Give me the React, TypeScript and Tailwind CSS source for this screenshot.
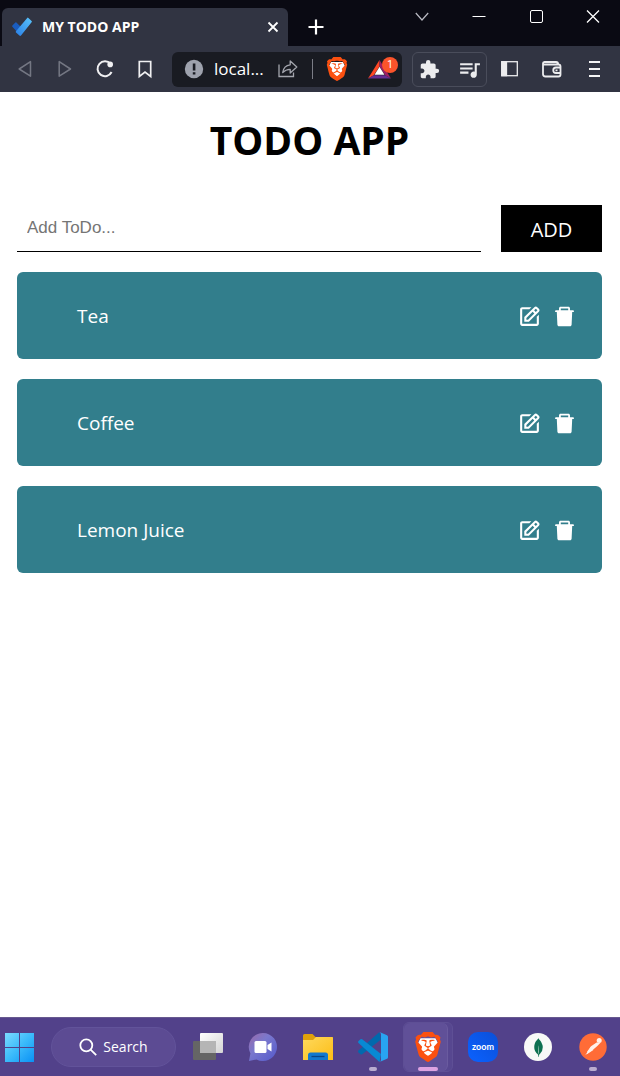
import { useState } from "react";
import type { ReactNode } from "react";
import { AiFillDelete } from "react-icons/ai";
import { BiEdit } from "react-icons/bi";
import { MdExtension, MdQueueMusic } from "react-icons/md";
import { SiBrave, SiMongodb } from "react-icons/si";

const initialTodos = ["Tea", "Coffee", "Lemon Juice"];

function BraveLion({ className }: { className: string }) {
  return (
    <span className={`relative block ${className}`}>
      <svg viewBox="0 0 24 24" className="absolute inset-0 size-full" aria-hidden="true">
        <path d="M6 5h12l2 4-3 9-5 4-5-4-3-9z" fill="#fff" />
      </svg>
      <SiBrave className="absolute inset-0 size-full text-[#fb5010]" />
    </span>
  );
}

function ToolButton({ label, children }: { label: string; children: ReactNode }) {
  return (
    <button type="button" aria-label={label} className="flex size-6 shrink-0 items-center justify-center">
      {children}
    </button>
  );
}

function TabStrip() {
  return (
    <div className="flex h-[46px] items-end bg-[#0a0a13]">
      <div className="ml-0.5 flex h-[38px] w-[286px] shrink-0 items-center rounded-t-md bg-[#313442] pr-[7px] pl-2.5">
        <svg viewBox="0 0 20 20" className="size-5 shrink-0" aria-hidden="true">
          <defs>
            <linearGradient id="tick" x1="0" y1="1" x2="1" y2="0">
              <stop offset="0" stopColor="#2a7fe6" />
              <stop offset="1" stopColor="#5ac4fb" />
            </linearGradient>
          </defs>
          <path d="M.4 8.6 3.4 5.500q.5-.5 1 0L11 12 7.400 17.400.4 9.700q-.5-.6 0-1.100Z" fill="#1a5cbe" />
          <path d="M4 14.300 15.200.9q.6-.7 1.200 0l3.200 3.100q.6.6 0 1.200L9 18.600q-.8.9-1.600 0L4 15.400q-.5-.5 0-1.100Z" fill="url(#tick)" />
        </svg>
        <span className="ml-2.5 flex-1 font-['Open_Sans','Noto_Sans',sans-serif] text-sm font-bold text-white">
          MY TODO APP
        </span>
        <button type="button" aria-label="Close tab" className="flex size-4 items-center justify-center">
          <svg viewBox="0 0 12 12" className="size-3" fill="none" stroke="#fff" strokeWidth="1.8" aria-hidden="true">
            <path d="m1.5 1.5 9 9M10.5 1.5l-9 9" />
          </svg>
        </button>
      </div>
      <button type="button" aria-label="New tab" className="ml-4 flex h-[38px] w-6 items-center justify-center">
        <svg viewBox="0 0 16 16" className="size-4" stroke="#fff" strokeWidth="2.2" aria-hidden="true">
          <path d="M8 .5v15M.5 8h15" />
        </svg>
      </button>
      <div className="ml-auto flex h-[46px] items-start gap-[41px] pt-2 pr-[19px] text-white">
        <button type="button" aria-label="Search tabs" className="flex size-4 items-center justify-center">
          <svg viewBox="0 0 16 16" className="size-4" fill="none" stroke="#b9bac2" strokeWidth="1.2" aria-hidden="true">
            <path d="m1.8 5 6.2 7 6.2-7" />
          </svg>
        </button>
        <button type="button" aria-label="Minimize" className="flex size-4 items-center justify-center">
          <svg viewBox="0 0 16 16" className="size-4" stroke="currentColor" aria-hidden="true">
            <path d="M1.5 8.5h13" />
          </svg>
        </button>
        <button type="button" aria-label="Maximize" className="flex size-4 items-center justify-center">
          <svg viewBox="0 0 16 16" className="size-4" fill="none" stroke="currentColor" aria-hidden="true">
            <rect x="2.5" y="2.5" width="12" height="12" rx="1.5" />
          </svg>
        </button>
        <button type="button" aria-label="Close window" className="flex size-4 items-center justify-center">
          <svg viewBox="0 0 16 16" className="size-4" fill="none" stroke="currentColor" strokeWidth="1.3" aria-hidden="true">
            <path d="m2 2.5 12 12M14 2.5l-12 12" />
          </svg>
        </button>
      </div>
    </div>
  );
}

function AddressBar() {
  return (
    <div className="ml-[15px] flex h-[35px] min-w-0 flex-1 items-center rounded-md bg-[#191b22] pr-1 pl-3">
      <svg viewBox="0 0 20 20" className="size-5 shrink-0" aria-hidden="true">
        <circle cx="10" cy="10" r="9.2" fill="#9ea2ad" />
        <path d="M8.8 4.6h2.6v7H8.8zM8.8 13.2h2.6v2.4H8.8z" fill="#191b22" />
      </svg>
      <span className="ml-2.5 flex-1 font-['Open_Sans','Noto_Sans',sans-serif] text-[17px] text-white">local...</span>
      <ToolButton label="Share">
        <svg viewBox="0 0 20 20" className="size-5" fill="none" stroke="#a3a5ad" strokeWidth="1.3" aria-hidden="true">
          <path d="M1 5.5v12h14.500v-4" />
          <path d="M12.2 2 18.8 8l-6.6 6v-3.7c-3.5-.1-5.5 1.1-7.5 3.3.6-4.5 3.2-7.4 7.5-7.8Z" strokeLinejoin="round" />
        </svg>
      </ToolButton>
      <span className="ml-3 h-5 w-px bg-[#7b7d86]" />
      <button type="button" aria-label="Brave Shields" className="ml-3">
        <BraveLion className="size-6" />
      </button>
      <button type="button" aria-label="Brave Rewards, 1 notification" className="relative ml-[19px] h-6 w-[30px]">
        <svg viewBox="0 0 24 22" className="mt-px h-[21px] w-[23px]" aria-hidden="true">
          <path d="M12 1 0 20.5 6 17l6-9.5Z" fill="#ff4724" />
          <path d="M12 1 24 20.5 18 17 12 7.5Z" fill="#9e1f63" />
          <path d="M0 20.5h24L18 17H6Z" fill="#662d91" />
          <path d="M12 8 6.8 16.5h10.4Z" fill="#fff" />
        </svg>
        <span className="absolute top-0 right-0 flex size-4 items-center justify-center rounded-full bg-[#fb542b] font-['Roboto',sans-serif] text-[10px] leading-4 text-white">
          1
        </span>
      </button>
    </div>
  );
}

function Toolbar() {
  return (
    <div className="flex h-[46px] items-center bg-[#313442] pr-3.5 pl-[13px]">
      <div className="flex gap-4">
        <ToolButton label="Back">
          <svg viewBox="0 0 24 24" className="size-6" fill="none" stroke="#747783" strokeWidth="1.5" aria-hidden="true">
            <path d="M17.500 4.600v14.600L6.200 12Z" strokeLinejoin="round" />
          </svg>
        </ToolButton>
        <ToolButton label="Forward">
          <svg viewBox="0 0 24 24" className="size-6" fill="none" stroke="#747783" strokeWidth="1.5" aria-hidden="true">
            <path d="M6.200 4.600v14.600L17.500 12Z" strokeLinejoin="round" />
          </svg>
        </ToolButton>
        <ToolButton label="Reload">
          <svg viewBox="0 0 24 24" className="size-6" fill="none" stroke="#f0f0f2" strokeWidth="2" aria-hidden="true">
            <path d="M17.6 7A7.4 7.4 0 1 0 18.6 15" />
            <circle cx="17.2" cy="7.4" r="2.8" fill="#f0f0f2" stroke="none" />
          </svg>
        </ToolButton>
        <ToolButton label="Bookmark">
          <svg viewBox="0 0 24 24" className="size-6" fill="none" stroke="#f0f0f2" strokeWidth="1.7" aria-hidden="true">
            <path d="M6.3 4.5h11.4v15L12 15l-5.7 4.5Z" />
          </svg>
        </ToolButton>
      </div>
      <AddressBar />
      <div className="ml-2.5 flex h-[35px] w-[75px] shrink-0 items-center justify-between rounded-md border border-[#4a4d5b] pr-1 pl-1.5 text-[#ececee]">
        <button type="button" aria-label="Extensions">
          <MdExtension className="size-[21px]" />
        </button>
        <button type="button" aria-label="Media controls">
          <MdQueueMusic className="size-[25px]" />
        </button>
      </div>
      <div className="ml-[11px] flex gap-[18px]">
        <ToolButton label="Sidebar">
          <svg viewBox="0 0 24 24" className="size-6" fill="none" stroke="#ececee" strokeWidth="1.3" aria-hidden="true">
            <rect x="3.7" y="4.7" width="15.6" height="14" />
            <path d="M4 5h4.5v13.5H4Z" fill="#ececee" />
          </svg>
        </ToolButton>
        <ToolButton label="Wallet">
          <svg viewBox="0 0 24 24" className="size-6" fill="none" stroke="#ececee" strokeWidth="1.8" aria-hidden="true">
            <path d="M3 6.500v10.500q0 2.500 2.500 2.500h13q2 0 2-2V9.500q0-2-2-2H4.500Q3 7.500 3 6.300T4.500 5H16q2.200 0 2.200 2.500" />
            <path d="M20.500 10.500h-4.500a2.700 2.700 0 0 0 0 5.500h4.500M15.500 13.300h2" />
          </svg>
        </ToolButton>
        <ToolButton label="Menu">
          <svg viewBox="0 0 24 24" className="size-6" stroke="#f4f4f5" strokeWidth="2" aria-hidden="true">
            <path d="M7 5h11M7 12h11M7 19h11" />
          </svg>
        </ToolButton>
      </div>
    </div>
  );
}

function TodoApp() {
  const [todos, setTodos] = useState(initialTodos);
  const [text, setText] = useState("");

  const add = () => {
    if (text.trim()) {
      setTodos([...todos, text.trim()]);
      setText("");
    }
  };

  return (
    <main className="flex-1 bg-white pr-[18px] pl-[17px] font-['Open_Sans','Noto_Sans',sans-serif]">
      <h1 className="pt-5 text-center text-[39px] leading-[56px] font-bold text-black">TODO APP</h1>
      <form
        className="mt-[37px] flex gap-5"
        onSubmit={(event) => {
          event.preventDefault();
          add();
        }}
      >
        <input
          type="text"
          aria-label="New todo"
          placeholder="Add ToDo..."
          value={text}
          onChange={(event) => setText(event.target.value)}
          className="h-[47px] min-w-0 flex-1 border-b border-black px-2.5 font-['Liberation_Sans',sans-serif] text-[17px] text-black outline-none placeholder:text-[#757575]"
        />
        <button type="submit" className="h-[47px] w-[101px] bg-black pt-0.5 text-xl text-white">
          ADD
        </button>
      </form>
      <ul className="mt-5 flex flex-col gap-5">
        {todos.map((todo, index) => (
          <li
            key={index}
            className="flex h-[87px] items-center rounded-md bg-[#327e8c] pt-0.5 pr-[25px] pl-[60px] text-white"
          >
            <span className="flex-1 text-[19px]">{todo}</span>
            <div className="flex gap-2.5">
              <button type="button" aria-label={`Edit ${todo}`}>
                <BiEdit className="size-[25px]" />
              </button>
              <button
                type="button"
                aria-label={`Delete ${todo}`}
                onClick={() => setTodos(todos.filter((_, i) => i !== index))}
              >
                <AiFillDelete className="size-[25px]" />
              </button>
            </div>
          </li>
        ))}
      </ul>
    </main>
  );
}

function TaskButton({ label, running, children }: { label: string; running?: boolean; children: ReactNode }) {
  return (
    <button type="button" aria-label={label} className="relative flex h-[50px] w-8 items-center justify-center">
      {children}
      {running && <span className="absolute bottom-px h-1 w-2 rounded-full bg-[#b9accf]" />}
    </button>
  );
}

function Taskbar() {
  return (
    <footer className="flex h-[59px] items-center border-t border-[#67598f] bg-[#52418a] pr-[11px] pl-1">
      <button type="button" aria-label="Start">
        <svg viewBox="0 0 30 30" className="size-[30px]" aria-hidden="true">
          <defs>
            <linearGradient id="win" gradientUnits="userSpaceOnUse" x1="0" y1="0" x2="30" y2="30">
              <stop offset="0" stopColor="#80ddff" />
              <stop offset=".5" stopColor="#3dbcfb" />
              <stop offset="1" stopColor="#0a91f5" />
            </linearGradient>
          </defs>
          <path d="M1 1h14v14H1zM16 1h14v14H16zM1 16h14v14H1zM16 16h14v14H16z" fill="url(#win)" />
        </svg>
      </button>
      <button
        type="button"
        className="ml-[17px] flex h-10 w-[125px] items-center justify-center gap-1.5 rounded-full border border-[#62539a] bg-[#5c4b93] font-['Open_Sans','Noto_Sans',sans-serif] text-sm text-white"
      >
        <svg viewBox="0 0 18 18" className="size-[18px]" fill="none" stroke="#fff" strokeWidth="1.8" aria-hidden="true">
          <circle cx="7.3" cy="7.3" r="6" />
          <path d="m11.6 11.6 5.6 5.6" />
        </svg>
        Search
      </button>
      <div className="ml-4 flex flex-1 items-center justify-between">
        <TaskButton label="Task view">
          <svg viewBox="0 0 32 32" className="size-8 shrink-0" aria-hidden="true">
            <defs>
              <linearGradient id="pane" x1="0" y1="0" x2="1" y2="1">
                <stop offset="0" stopColor="#fff" />
                <stop offset="1" stopColor="#d4d4d4" />
              </linearGradient>
            </defs>
            <rect x="1" y="10" width="23" height="19" rx="1" fill="#656565" />
            <rect x="8" y="2" width="23" height="20" rx="1" fill="url(#pane)" />
            <path d="M8 10h16v12H8z" fill="#b5b5b5" />
          </svg>
        </TaskButton>
        <TaskButton label="Chat">
          <svg viewBox="0 0 32 32" className="size-8 shrink-0" aria-hidden="true">
            <defs>
              <linearGradient id="chat" x1="0" y1="0" x2="1" y2="1">
                <stop offset="0" stopColor="#9a69a8" />
                <stop offset=".4" stopColor="#7a78cd" />
                <stop offset="1" stopColor="#5459cc" />
              </linearGradient>
            </defs>
            <path d="M16 2a14 14 0 1 1-6.500 26.400L2 30l1.400-7.400A14 14 0 0 1 16 2Z" fill="url(#chat)" />
            <rect x="7.5" y="10" width="12" height="12" rx="1.5" fill="#fff" />
            <path d="m20.5 14 4-2.6v9.2l-4-2.6Z" fill="#fff" />
          </svg>
        </TaskButton>
        <TaskButton label="File Explorer">
          <svg viewBox="0 0 32 32" className="size-8 shrink-0" aria-hidden="true">
            <defs>
              <linearGradient id="folder" x1="0" y1="0" x2="1" y2="1">
                <stop offset="0" stopColor="#ffd95d" />
                <stop offset="1" stopColor="#fcbd16" />
              </linearGradient>
            </defs>
            <path d="M1 4.5Q1 3 2.5 3h8L13.5 6H30q1 0 1 1v5H1Z" fill="#e0a10b" />
            <path d="M1 9h10l3-3h16q1 0 1 1v22H1Z" fill="url(#folder)" />
            <path d="M6 29v-5q0-2.500 2.500-2.500h15Q26 21.500 26 24v5Z" fill="#1379ce" />
            <path d="M9.5 25.5h13" stroke="#0b4686" strokeWidth="1.3" />
          </svg>
        </TaskButton>
        <TaskButton label="Visual Studio Code" running>
          <svg viewBox="0 0 32 32" className="size-8 shrink-0" aria-hidden="true">
            <path d="M22.5 1 1.5 19.5q-1 1 0 2l2 1.8q.8.6 1.7 0L24 8.500Z" fill="#0069ad" />
            <path d="M22.5 31 1.5 12q-1-1 0-2l2-1.8q.8-.6 1.7 0L24 23Z" fill="#0889d3" />
            <path d="m22.5 1 7.5 3.200q1 .5 1 1.600v20.400q0 1.100-1 1.600L22.500 31Q24 30.500 24 28.500V3.500Q24 1.500 22.500 1Z" fill="#28a4f1" />
          </svg>
        </TaskButton>
        <button
          type="button"
          aria-label="Brave"
          className="relative -mx-[9px] flex h-[50px] w-[50px] items-center justify-center rounded-md border border-[#5e4f95] bg-[#574790]"
        >
          <span className="absolute inset-y-0 left-0 w-[44px] rounded-md border-r border-[#6a5b9f] bg-[#605098]" />
          <BraveLion className="size-[30px]" />
          <span className="absolute bottom-0 h-1 w-5 rounded-full bg-[#dda3e2]" />
        </button>
        <TaskButton label="Zoom">
          <span className="flex size-[30px] shrink-0 items-center justify-center rounded-[10px] bg-linear-to-bl from-[#0b4fd8] to-[#0b62ff] font-['Lato',sans-serif] text-[9px] leading-4 font-bold text-white">
            zoom
          </span>
        </TaskButton>
        <TaskButton label="MongoDB Compass">
          <span className="flex size-7 shrink-0 items-center justify-center rounded-full bg-[#f8f9f7]">
            <SiMongodb className="size-[19px] text-[#0d7050]" />
          </span>
        </TaskButton>
        <TaskButton label="Postman" running>
          <svg viewBox="0 0 28 28" className="size-7 shrink-0" aria-hidden="true">
            <circle cx="14" cy="14" r="13.7" fill="#ff6c37" />
            <circle cx="20.2" cy="7.4" r="2.5" fill="#fff1ea" />
            <path d="M17.6 9.4 12.4 13l-2.4 4-3.8 5.2 5-3.800 2.800-1.600 4.600-4 2.600-2.800Z" fill="#fff1ea" />
            <path d="m12.5 13.500-4 5.500M14 16.500 8 20.500" stroke="#fff1ea" strokeWidth="1.2" />
          </svg>
        </TaskButton>
      </div>
    </footer>
  );
}

export default function App() {
  return (
    <div className="flex min-h-screen flex-col bg-white">
      <header>
        <TabStrip />
        <Toolbar />
      </header>
      <TodoApp />
      <Taskbar />
    </div>
  );
}
